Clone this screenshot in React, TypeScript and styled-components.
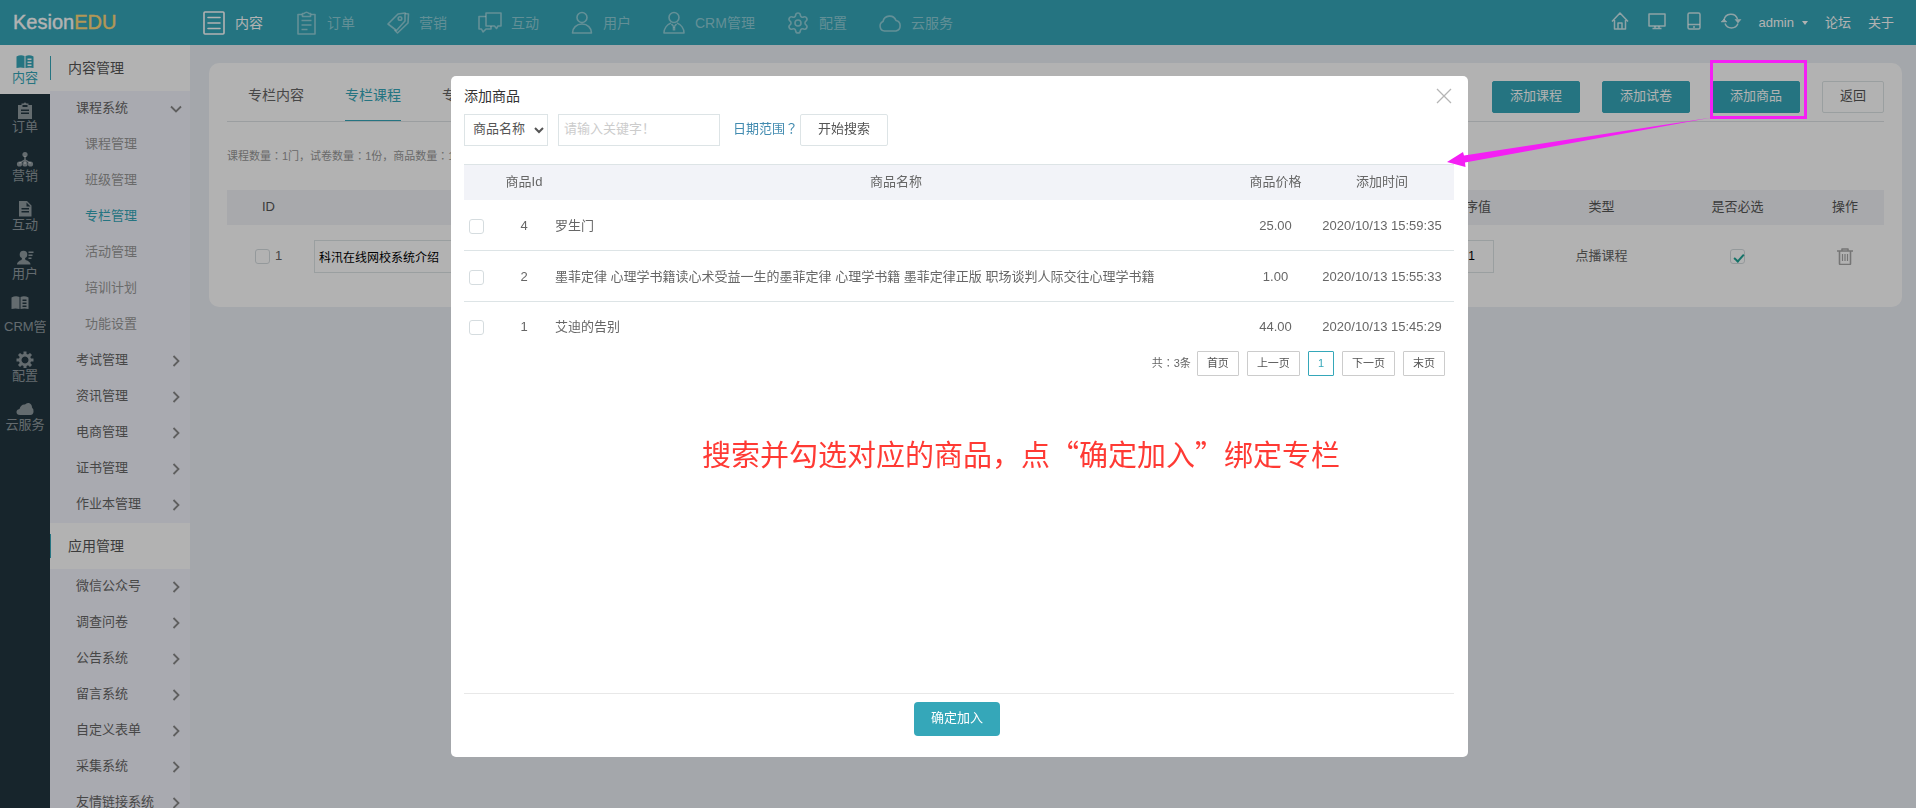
import React from "react";
import styled, { createGlobalStyle, css } from "styled-components";
import { Settings } from "lucide-react";

const TEAL = "#35a7b9";
const LINE = "#dde4e6";

const GlobalStyle = createGlobalStyle`
  * { box-sizing: border-box; }
  body {
    margin: 0;
    background: #ebeff5;
    color: #666;
    font: 13px/20px "Liberation Sans", "Noto Sans CJK SC", sans-serif;
  }
  button, input, select { font: inherit; color: inherit; margin: 0; }
  a { color: inherit; text-decoration: none; }
  ul, h1, h2, p { margin: 0; padding: 0; list-style: none; font-weight: 400; }
  svg { display: block; flex: none; }
`;

/* Full-width punctuation set in the middle of its cell */
const Mark = styled.span`
  font-family: "Noto Sans CJK TC", sans-serif;
  line-height: 1;
`;

/* ---------- page frame ---------- */

const Page = styled.div`
  display: flex;
  flex-direction: column;
  height: 100vh;
  overflow: hidden;
`;

const TopBar = styled.header`
  display: flex;
  align-items: center;
  flex: none;
  height: 45px;
  padding: 0 22px 0 13px;
  background: ${TEAL};
  color: #fff;
`;

const Brand = styled.a`
  width: 189px;
  font-size: 20px;
  line-height: 45px;
  -webkit-text-stroke: 0.4px;
  span { color: #ffd97a; }
`;

const MainNav = styled.nav`
  display: flex;
  gap: 31px;
  flex: 1;
`;

const NavLink = styled.a<{ $active?: boolean }>`
  display: flex;
  align-items: center;
  gap: 9px;
  font-size: 14px;
  line-height: 20px;
  color: ${(p) => (p.$active ? "#fff" : "rgba(255,255,255,.45)")};
`;

const Tools = styled.div`
  display: flex;
  align-items: center;
  gap: 17px;
`;

const ToolIcons = styled.div`
  display: flex;
  gap: 15px;
  padding-bottom: 3px;
`;

const ToolButton = styled.button`
  display: flex;
  width: 22px;
  justify-content: center;
  padding: 0;
  border: 0;
  background: none;
  color: rgba(255, 255, 255, 0.75);
`;

const Account = styled.button`
  display: flex;
  align-items: center;
  gap: 8px;
  padding: 0;
  border: 0;
  background: none;
  color: #fff;
  &::after {
    content: "";
    border: 3px solid transparent;
    border-top: 4px solid #fff;
    border-bottom: 0;
  }
`;

const Body = styled.div`
  display: flex;
  flex: 1;
  min-height: 0;
`;

/* ---------- side bars ---------- */

const Rail = styled.nav`
  flex: none;
  width: 50px;
  background: #213640;
`;

const RailLink = styled.a<{ $active?: boolean; $wide?: boolean }>`
  display: flex;
  flex-direction: column;
  align-items: center;
  height: 49px;
  padding-top: 8px;
  overflow: hidden;
  white-space: nowrap;
  background: ${(p) => (p.$active ? "#fff" : "transparent")};
  color: ${(p) => (p.$active ? TEAL : "rgba(255,255,255,.5)")};
  line-height: 16px;
  ${(p) =>
    p.$wide &&
    css`
      align-items: flex-start;
      height: 53px;
      padding: 4px 4px 0;
      svg { margin: 0 0 8px 7px; }
    `}
`;

const Menu = styled.nav`
  flex: none;
  width: 140px;
  overflow: hidden;
  background: #f3f4fc;
`;

const MenuHeading = styled.h2`
  display: flex;
  align-items: center;
  height: 46px;
  background: #fff;
  color: #555;
  font-size: 14px;
  &::before {
    content: "";
    width: 1px;
    height: 24px;
    margin-right: 17px;
    background: ${TEAL};
  }
`;

const MenuLink = styled.a<{ $sub?: boolean; $active?: boolean }>`
  display: flex;
  align-items: center;
  justify-content: space-between;
  height: 36px;
  padding: 0 7px 2px ${(p) => (p.$sub ? 35 : 26)}px;
  white-space: nowrap;
  color: ${(p) => (p.$active ? TEAL : p.$sub ? "#999" : "#666")};
  svg { margin-top: 2px; color: #888; }
`;

/* ---------- content card ---------- */

const Content = styled.main`
  flex: 1;
  min-width: 0;
  padding: 18px 14px 0 19px;
`;

const Card = styled.section`
  padding: 0 18px 20px;
  border-radius: 10px;
  background: #fff;
`;

const CardBar = styled.div`
  display: flex;
  justify-content: space-between;
  height: 59px;
  border-bottom: 1px solid #dfe3e5;
`;

const Tabs = styled.div`
  display: flex;
  gap: 41px;
  padding-left: 21px;
`;

const Tab = styled.a<{ $active?: boolean }>`
  height: 58px;
  padding-top: 22px;
  font-size: 14px;
  border-bottom: 1px solid ${(p) => (p.$active ? TEAL : "transparent")};
  color: ${(p) => (p.$active ? TEAL : "#666")};
`;

const Actions = styled.div`
  display: flex;
  gap: 22px;
  padding-top: 18px;
`;

const Button = styled.button<{ $primary?: boolean }>`
  height: 32px;
  padding: 0 17px 2px;
  border: 1px solid ${(p) => (p.$primary ? TEAL : LINE)};
  border-radius: 2px;
  background: ${(p) => (p.$primary ? TEAL : "#fff")};
  color: ${(p) => (p.$primary ? "#fff" : "#555")};
`;

const Summary = styled.p`
  height: 68px;
  padding-top: 25px;
  font-size: 11px;
  line-height: 19px;
  color: #999;
`;

const Table = styled.table`
  width: 100%;
  table-layout: fixed;
  border-collapse: collapse;
  text-align: center;
  th, td { padding: 0; font-weight: 400; }
`;

const CourseTable = styled(Table)`
  th { height: 35px; padding-bottom: 2px; background: #f1f2f6; color: #555; }
  td { height: 62px; }
`;

const TextField = styled.input`
  height: 33px;
  padding: 0 4px;
  border: 1px solid ${LINE};
  background: #fff;
  color: #000;
  font-size: 12px;
`;

const NameField = styled(TextField)`
  display: block;
  width: 300px;
  margin-left: 4px;
`;

const OrderField = styled(TextField)`
  width: 45px;
  text-align: center;
`;

const CheckBox = styled.input.attrs({ type: "checkbox" })`
  appearance: none;
  display: inline-block;
  position: relative;
  width: 15px;
  height: 15px;
  border: 1px solid #d5dcdf;
  border-radius: 3px;
  background: #fff;
  vertical-align: middle;
  &:checked::after {
    content: "";
    position: absolute;
    left: 5px;
    top: 2px;
    width: 4px;
    height: 8px;
    border: solid #1fa596;
    border-width: 0 2px 2px 0;
    transform: rotate(42deg);
  }
`;

const RowPick = styled.label`
  display: flex;
  align-items: center;
  gap: 5px;
  padding-left: 28px;
`;

const IconButton = styled.button`
  padding: 0;
  border: 0;
  background: none;
  color: #a8a8a8;
  vertical-align: middle;
`;

/* ---------- dialog ---------- */

const Shade = styled.div`
  position: fixed;
  inset: 0;
  display: flex;
  padding: 76px 448px 51px 451px;
  background: rgba(0, 0, 0, 0.3);
`;

const Dialog = styled.section`
  position: relative;
  display: flex;
  flex-direction: column;
  flex: 1;
  min-width: 0;
  padding: 9px 14px 0 13px;
  border-radius: 5px;
  background: #fff;
`;

const DialogHead = styled.div`
  display: flex;
  align-items: center;
  justify-content: space-between;
  height: 22px;
  padding-right: 2px;
  color: #333;
`;

const DialogTitle = styled.h1`
  font-size: 14px;
`;

const CloseButton = styled(IconButton)`
  color: #b5b5b5;
`;

const SearchForm = styled.form`
  display: flex;
  align-items: center;
  height: 33px;
  margin: 6px 0 18px;
`;

const Select = styled.select`
  width: 84px;
  height: 32px;
  padding: 0 4px 2px;
  border: 1px solid ${LINE};
  border-radius: 0;
  background: #fff;
  color: #555;
`;

const Keyword = styled.input`
  width: 162px;
  height: 32px;
  margin: 0 13px 0 10px;
  padding: 0 5px 2px;
  border: 1px solid ${LINE};
  &::placeholder { color: #ccc; }
`;

const RangeLink = styled.a`
  width: 67px;
  padding-bottom: 2px;
  white-space: nowrap;
  color: #428bb0;
`;

const GoodsTable = styled(Table)`
  border-top: 1px solid ${LINE};
  th { height: 35px; background: #f2f3f8; }
  td { height: 51px; border-bottom: 1px solid ${LINE}; padding-top: 2px; }
  tr:last-child td { border-bottom: 0; height: 49px; }
  td:first-child { text-align: left; padding-left: 5px; }
  td:nth-child(3) { text-align: left; padding-left: 4px; white-space: nowrap; }
`;

const Pager = styled.nav`
  display: flex;
  align-items: center;
  justify-content: flex-end;
  gap: 8px;
  height: 25px;
  padding-right: 9px;
  font-size: 11px;
`;

const PagerTotal = styled.span`
  margin-right: -2px;
`;

const PageLink = styled.a<{ $current?: boolean }>`
  height: 25px;
  padding: 0 9px;
  border: 1px solid ${(p) => (p.$current ? TEAL : "#ccc")};
  border-radius: 1px;
  line-height: 22px;
  color: ${(p) => (p.$current ? TEAL : "#555")};
`;

const DialogFoot = styled.div`
  height: 64px;
  margin-top: auto;
  padding: 8px 4px 0 0;
  border-top: 1px solid #e8e8e8;
  text-align: center;
`;

const Confirm = styled.button`
  height: 34px;
  padding: 0 17px 2px;
  border: 0;
  border-radius: 4px;
  background: ${TEAL};
  color: #fff;
`;

const Hint = styled.p`
  position: absolute;
  left: 251px;
  top: 357px;
  white-space: nowrap;
  font-family: "Noto Sans CJK SC", sans-serif;
  font-size: 29px;
  line-height: 40px;
  color: #ff3a34;
`;

const Callout = styled.svg`
  position: fixed;
  top: 58px;
  right: 106px;
  width: 366px;
  height: 112px;
  pointer-events: none;
`;

/* ---------- icons ---------- */

const line = (w: number, h: number, d: React.ReactNode, sw = 1.6) => (
  <svg width={w} height={h} viewBox={`0 0 ${w} ${h}`} fill="none" stroke="currentColor" strokeWidth={sw} strokeLinejoin="round" aria-hidden="true">
    {d}
  </svg>
);

const solid = (w: number, h: number, d: React.ReactNode) => (
  <svg width={w} height={h} viewBox={`0 0 ${w} ${h}`} fill="currentColor" fillRule="evenodd" aria-hidden="true">
    {d}
  </svg>
);

const navIcons = {
  list: line(24, 24, <><rect x="2" y="1" width="20" height="22" rx="1" /><path d="M6 6.500h12M6 12h12M6 17.500h12" strokeLinecap="round" /></>),
  clipboard: line(24, 24, <><path d="M8 3.500H4V23h17V3.500h-4" /><path d="M8.500 5.500V2.500h1.500q2.500-2.500 5 0h1.500v3z" /><path d="M7.500 9.500h10M7.500 14h10M7.500 18.500h6" /></>),
  tag: line(24, 24, <><path d="M2 13 12 3l7-1v8L10.500 19.500z" /><path d="M19 2.500l3.500.5-.5 9L11.500 22l-3-3" /><circle cx="14" cy="7.500" r="1.800" /></>),
  chat: line(24, 24, <><path d="M8 2h15v13h-3l-1.500 2.500L16.500 15H8z" /><path d="M8 5.500H1V18h2.500l1.500 3 3-3h5v-3" /></>),
  user: line(24, 24, <><circle cx="12" cy="6.500" r="5" /><path d="M2.500 22c0-5 4-9 9.500-9s9.500 4 9.500 9z" /></>),
  crm: line(24, 24, <><circle cx="12" cy="6.500" r="5" /><path d="M9 12C5 13.500 2 17.500 2 22h20c0-4.500-3-8.500-7-10M9.500 13l2.500 3 2.500-3" /><path d="M12 16v3.500" strokeWidth="2.600" /></>),
  gear: <Settings size={24} strokeWidth={1.6} aria-hidden="true" />,
  cloud: line(24, 24, <path d="M6.500 20A5 5 0 0 1 5 10.500 6.800 6.800 0 0 1 18 9.500 5.400 5.400 0 0 1 18 20z" />),
};

const toolIcons = {
  home: line(18, 18, <path d="M1 9.500 9 1l8 8.500M3.500 8v9h11V8M7 17v-6h4v6" />, 1.5),
  screen: line(18, 18, <><rect x="1" y="2" width="16" height="12" /><path d="M7 14v2.500M11 14v2.500M4.500 16.500h9" /></>, 1.5),
  phone: line(18, 18, <><rect x="3" y="1" width="12" height="16" rx="1.500" /><path d="M3 12.500h12M8 15h2" /></>, 1.5),
  refresh: line(22, 18, <><path d="M4 8a7 7 0 0 1 13.500-1M18 11.500a7 7 0 0 1-13 0" /><path d="M1 10 4 7l3 3zM15 7.500h6L18 11z" fill="currentColor" strokeWidth=".5" /></>, 1.5),
};

const railIcons = {
  book: solid(18, 17, <path d="M.5 3.500Q4.500 1.500 8.500 3v12Q4.500 14 .5 15zM9.500 3q4-1.500 8 .5V15q-4-1-8 0zM11.500 5.500V7h4V5.500zm0 3V10h4V8.500zm0 3V13h4v-1.500z" />),
  clipboard: solid(18, 17, <path d="M2 3h3.500V1.500h2q1.500-2 3 0h2V3H16v14H2zM6.500 3v2h5V3zM5 7.500V9h8V7.500zm0 3V12h8v-1.500z" />),
  sitemap: solid(18, 17, <><circle cx="9" cy="3.500" r="2.600" /><circle cx="3.500" cy="13" r="2.600" /><circle cx="9" cy="13" r="2.600" /><circle cx="14.500" cy="13" r="2.600" /><path d="M8.300 5h1.400v3.500l5.300 3-.7 1.200-4.600-2.500V13H8.300v-2.800l-4.600 2.500-.7-1.200 5.300-3z" /></>),
  file: solid(18, 17, <path d="M3 1h8l4.500 4.500V16.500H3zM5.500 8v1.500H13V8zm0 3v1.500H13V11zM10.500 2.500v4h4z" />),
  person: solid(18, 17, <><circle cx="7.500" cy="5.500" r="3.800" /><path d="M1 15.500q0-3 4.500-4.500l.5-2h3l.5 2q5 1.500 5 4.500zM12.500 2.500h5V4h-5zm0 3h4V7h-4zm0 3h3V10h-3z" /></>),
  gear: solid(18, 17, <path d="M7.500.5h3V3l1.500.6L14 2l2 2-1.700 2 .7 1.500h2.500v3H15l-.7 1.500L16 14l-2 2-2-1.700-1.500.7v2h-3v-2L6 14.300 4 16l-2-2 1.700-2L3 10.500H.5v-3H3L3.700 6 2 4l2-2 2 1.600L7.500 3zM9 5.500a3.500 3.500 0 1 0 .01 0z" />),
  cloud: solid(18, 17, <path d="M4 15Q.5 15 .5 12q0-2.500 3-3Q5 4 9 4.500q1.500-2 4-1.500 3 1 3 4.500 2 1.500 1.500 4.500-.5 3-3 3z" />),
};

const Chevron = ({ down }: { down?: boolean }) => (
  <svg width="14" height="12" viewBox="0 0 14 12" fill="none" stroke="currentColor" strokeWidth="1.800" aria-hidden="true">
    <path d={down ? "M2 3.500l5 5 5-5" : "M4.500 1l5 5-5 5"} />
  </svg>
);

/* ---------- data ---------- */

const nav: [keyof typeof navIcons, string][] = [
  ["list", "内容"], ["clipboard", "订单"], ["tag", "营销"], ["chat", "互动"],
  ["user", "用户"], ["crm", "CRM管理"], ["gear", "配置"], ["cloud", "云服务"],
];

const tools: [keyof typeof toolIcons, string][] = [
  ["home", "首页"], ["screen", "电脑版"], ["phone", "手机版"], ["refresh", "刷新"],
];

const rail: [keyof typeof railIcons, string][] = [
  ["book", "内容"], ["clipboard", "订单"], ["sitemap", "营销"], ["file", "互动"],
  ["person", "用户"], ["book", "CRM管"], ["gear", "配置"], ["cloud", "云服务"],
];

const courseMenu = ["课程管理", "班级管理", "专栏管理", "活动管理", "培训计划", "功能设置"];
const contentMenu = ["考试管理", "资讯管理", "电商管理", "证书管理", "作业本管理"];
const appMenu = ["微信公众号", "调查问卷", "公告系统", "留言系统", "自定义表单", "采集系统", "友情链接系统"];

const goods = [
  { id: 4, name: "罗生门", price: "25.00", time: "2020/10/13 15:59:35" },
  { id: 2, name: "墨菲定律 心理学书籍读心术受益一生的墨菲定律 心理学书籍 墨菲定律正版 职场谈判人际交往心理学书籍", price: "1.00", time: "2020/10/13 15:55:33" },
  { id: 1, name: "艾迪的告别", price: "44.00", time: "2020/10/13 15:45:29" },
];

/* ---------- sections ---------- */

const SideMenu = () => (
  <Menu>
    <MenuHeading>内容管理</MenuHeading>
    <MenuLink href="#">课程系统<Chevron down /></MenuLink>
    {courseMenu.map((t) => (
      <MenuLink key={t} href="#" $sub $active={t === "专栏管理"}>{t}</MenuLink>
    ))}
    {contentMenu.map((t) => (
      <MenuLink key={t} href="#">{t}<Chevron /></MenuLink>
    ))}
    <MenuHeading>应用管理</MenuHeading>
    {appMenu.map((t) => (
      <MenuLink key={t} href="#">{t}<Chevron /></MenuLink>
    ))}
  </Menu>
);

const ColumnCourses = () => (
  <Card>
    <CardBar>
      <Tabs>
        <Tab href="#">专栏内容</Tab>
        <Tab href="#" $active>专栏课程</Tab>
        <Tab href="#">专栏设置</Tab>
      </Tabs>
      <Actions>
        <Button $primary>添加课程</Button>
        <Button $primary>添加试卷</Button>
        <Button $primary>添加商品</Button>
        <Button>返回</Button>
      </Actions>
    </CardBar>
    <Summary>
      课程数量<Mark>：</Mark>1门，试卷数量<Mark>：</Mark>1份，商品数量<Mark>：</Mark>1件
    </Summary>
    <CourseTable>
      <colgroup>
        <col style={{ width: 83 }} /><col /><col style={{ width: 125 }} />
        <col style={{ width: 135 }} /><col style={{ width: 137 }} /><col style={{ width: 78 }} />
      </colgroup>
      <thead>
        <tr><th>ID</th><th>名称</th><th>排序值</th><th>类型</th><th>是否必选</th><th>操作</th></tr>
      </thead>
      <tbody>
        <tr>
          <td><RowPick><CheckBox />1</RowPick></td>
          <td><NameField aria-label="名称" defaultValue="科汛在线网校系统介绍" /></td>
          <td><OrderField aria-label="排序值" defaultValue="1" /></td>
          <td>点播课程</td>
          <td><CheckBox aria-label="是否必选" defaultChecked /></td>
          <td>
            <IconButton aria-label="删除">
              {line(16, 17, <><path d="M0 3h16M5 3V1h6v2M2.500 3v12.500q0 1 1 1h9q1 0 1-1V3" /><path d="M5.500 6v7M8 6v7M10.500 6v7" strokeWidth="1.200" /></>, 1.6)}
            </IconButton>
          </td>
        </tr>
      </tbody>
    </CourseTable>
  </Card>
);

const AddGoodsDialog = () => (
  <Dialog role="dialog" aria-labelledby="dialog-title">
    <DialogHead>
      <DialogTitle id="dialog-title">添加商品</DialogTitle>
      <CloseButton aria-label="关闭">{line(16, 16, <path d="M1 1l14 14M15 1L1 15" />, 1.3)}</CloseButton>
    </DialogHead>
    <SearchForm>
      <Select aria-label="搜索字段"><option>商品名称</option></Select>
      <Keyword aria-label="关键字" placeholder="请输入关键字！" />
      <RangeLink href="#">日期范围<Mark>？</Mark></RangeLink>
      <Button type="button">开始搜索</Button>
    </SearchForm>
    <GoodsTable>
      <colgroup>
        <col style={{ width: 33 }} /><col style={{ width: 54 }} /><col />
        <col style={{ width: 69 }} /><col style={{ width: 144 }} />
      </colgroup>
      <thead>
        <tr><th /><th>商品Id</th><th>商品名称</th><th>商品价格</th><th>添加时间</th></tr>
      </thead>
      <tbody>
        {goods.map((g) => (
          <tr key={g.id}>
            <td><CheckBox aria-label={g.name} /></td>
            <td>{g.id}</td><td>{g.name}</td><td>{g.price}</td><td>{g.time}</td>
          </tr>
        ))}
      </tbody>
    </GoodsTable>
    <Pager>
      <PagerTotal>共<Mark>：</Mark>3条</PagerTotal>
      <PageLink href="#">首页</PageLink>
      <PageLink href="#">上一页</PageLink>
      <PageLink href="#" $current>1</PageLink>
      <PageLink href="#">下一页</PageLink>
      <PageLink href="#">末页</PageLink>
    </Pager>
    <Hint>搜索并勾选对应的商品，点“确定加入”绑定专栏</Hint>
    <DialogFoot><Confirm>确定加入</Confirm></DialogFoot>
  </Dialog>
);

export default function App() {
  return (
    <>
      <GlobalStyle />
      <Page>
        <TopBar>
          <Brand href="#">Kesion<span>EDU</span></Brand>
          <MainNav>
            {nav.map(([icon, label], i) => (
              <NavLink key={label} href="#" $active={i === 0}>{navIcons[icon]}{label}</NavLink>
            ))}
          </MainNav>
          <Tools>
            <ToolIcons>
              {tools.map(([icon, label]) => (
                <ToolButton key={label} aria-label={label}>{toolIcons[icon]}</ToolButton>
              ))}
            </ToolIcons>
            <Account>admin</Account>
            <a href="#">论坛</a>
            <a href="#">关于</a>
          </Tools>
        </TopBar>
        <Body>
          <Rail>
            {rail.map(([icon, label], i) => (
              <RailLink key={label} href="#" $active={i === 0} $wide={label === "CRM管"}>
                {railIcons[icon]}<span>{label}</span>
              </RailLink>
            ))}
          </Rail>
          <SideMenu />
          <Content><ColumnCourses /></Content>
        </Body>
      </Page>
      <Shade><AddGoodsDialog /></Shade>
      <Callout viewBox="0 0 366 112" aria-hidden="true">
        <rect x="267.500" y="3.500" width="94" height="56" fill="none" stroke="#f41ff4" strokeWidth="3" />
        <path d="M268 59.500 20 97.500 19 94 3 104l18.500 5-.5-4.500z" fill="#f41ff4" />
      </Callout>
    </>
  );
}
